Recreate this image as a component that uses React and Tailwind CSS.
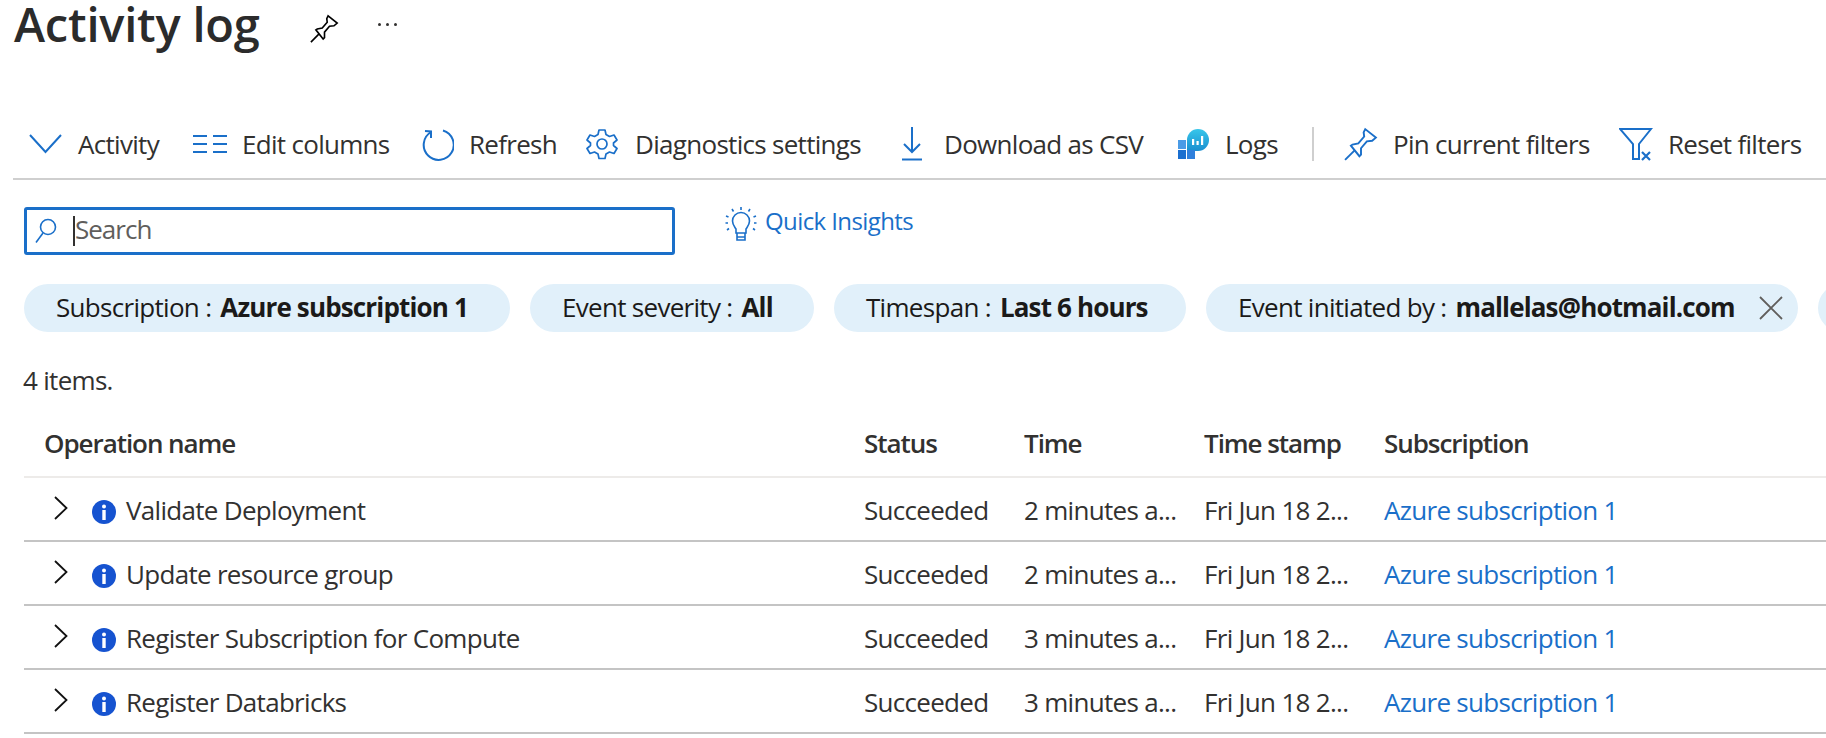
import React from 'react';

const font = "font-['Open_Sans','Noto_Sans',sans-serif]";

const PinIcon = ({ className }) => (
    <svg viewBox="0 0 32 32" fill="none" stroke="currentColor" strokeWidth="1.8" className={className}>
        <path d="M20 2 L30 10 L26.5 13 L21.5 13.5 L16 20 L16 26 L14.5 27.5 L6.5 17.5 L8 16.5 L13.5 15.5 L19 9 L18.5 5 Z" strokeLinejoin="miter" />
        <path d="M10 22 L1 31" />
    </svg>
);

const ChevronDown = () => (
    <svg viewBox="0 0 33 20" fill="none" stroke="currentColor" strokeWidth="2" className="w-[33px] h-[20px]">
        <path d="M1 1 L16.5 18 L32 1" />
    </svg>
);

const EditColumns = () => (
    <svg viewBox="0 0 34 20" fill="currentColor" className="w-[34px] h-[20px]">
        <rect x="0" y="1" width="14" height="2" />
        <rect x="0" y="9" width="14" height="2" />
        <rect x="0" y="17" width="14" height="2" />
        <rect x="20" y="1" width="14" height="2" />
        <rect x="20" y="9" width="14" height="2" />
        <rect x="20" y="17" width="14" height="2" />
    </svg>
);

const RefreshIcon = () => (
    <svg viewBox="0 0 34 34" fill="none" stroke="currentColor" strokeWidth="2" className="w-[34px] h-[34px] ml-[1px]">
        <path d="M11 5 A15 15 0 1 0 23 3.5" />
        <path d="M5 4 L11 4.5 L11 11" />
    </svg>
);

const GearIcon = () => (
    <svg viewBox="0 0 32 32" fill="none" stroke="currentColor" strokeWidth="1.7" className="w-[32px] h-[32px]">
        <circle cx="16" cy="16" r="5" />
        <path d="M13 2 L19 2 L20 6.5 L23.5 8.5 L28 7 L31 12 L27.5 15 L27.5 17.5 L31 20.5 L28 25.5 L23.5 24 L20 26 L19 30.5 L13 30.5 L12 26 L8.5 24 L4 25.5 L1 20.5 L4.5 17.5 L4.5 15 L1 12 L4 7 L8.5 8.5 L12 6.5 Z" strokeLinejoin="round" />
    </svg>
);

const DownloadIcon = () => (
    <svg viewBox="0 0 20 34" fill="none" stroke="currentColor" strokeWidth="2" className="w-[20px] h-[34px]">
        <path d="M10 0 L10 25" />
        <path d="M2 17 L10 25 L18 17" />
        <path d="M0 32.5 L20 32.5" />
    </svg>
);

const LogsIcon = () => (
    <svg viewBox="0 0 32 32" className="w-[32px] h-[32px]">
        <defs>
            <linearGradient id="logsBubble" x1="0" y1="0" x2="0" y2="1">
                <stop offset="0" stopColor="#37c6ea" />
                <stop offset="1" stopColor="#1a8fd0" />
            </linearGradient>
        </defs>
        <path d="M9 12 A11 11 0 1 1 20 23 L9 23 Z" fill="url(#logsBubble)" />
        <rect x="14" y="11" width="2.2" height="6" fill="#fff" />
        <rect x="18.5" y="13" width="2.2" height="4" fill="#fff" />
        <rect x="23" y="8" width="2.2" height="9" fill="#fff" />
        <rect x="0" y="12" width="8" height="9" fill="#4a9be6" />
        <rect x="0" y="22" width="8" height="9" fill="#1a6fd0" />
        <rect x="9" y="22" width="8" height="9" fill="#2f80dc" />
    </svg>
);

const FilterIcon = () => (
    <svg viewBox="0 0 34 34" fill="none" stroke="currentColor" strokeWidth="2" className="w-[34px] h-[34px]">
        <path d="M1 2 L32 2 L20 17 L20 32 L14 32 L14 17 Z" />
        <path d="M23 25 L31 33 M31 25 L23 33" strokeWidth="2.2" />
    </svg>
);

const SearchIcon = () => (
    <svg viewBox="0 0 22 26" fill="none" stroke="currentColor" strokeWidth="1.6" className="w-[22px] h-[26px]">
        <circle cx="13" cy="9" r="7.5" />
        <path d="M8 15 L1 24.5" />
    </svg>
);

const BulbIcon = () => (
    <svg viewBox="0 0 32 36" fill="none" stroke="currentColor" strokeWidth="1.6" className="w-[32px] h-[36px]">
        <path d="M11 27 L11 23 C9 20 7.5 18.5 7.5 15 A8.5 8.5 0 0 1 24.5 15 C24.5 18.5 23 20 21 23 L21 27 Z" />
        <path d="M12 31 L12 34 L20 34 L20 27 M12 27 L12 31 L20 31" />
        <path d="M16 1 L16 4 M7 3 L8.5 5.5 M25 3 L23.5 5.5 M1 10 L3.5 11 M31 10 L28.5 11 M0.5 17 L3 17 M31.5 17 L29 17 M2 24 L4 22.5 M30 24 L28 22.5" />
    </svg>
);

const CloseIcon = () => (
    <svg viewBox="0 0 24 24" fill="none" stroke="#605e5c" strokeWidth="1.8" className="w-[24px] h-[24px]">
        <path d="M1 1 L23 23 M23 1 L1 23" />
    </svg>
);

const ChevronRight = () => (
    <svg viewBox="0 0 14 24" fill="none" stroke="#111" strokeWidth="1.8" className="w-[14px] h-[24px]">
        <path d="M1 1 L12.5 12 L1 23" />
    </svg>
);

const InfoIcon = () => (
    <svg viewBox="0 0 24 24" className="w-[24px] h-[24px]">
        <circle cx="12" cy="12" r="12" fill="#1653d0" />
        <circle cx="12" cy="6.5" r="2" fill="#fff" />
        <rect x="10.3" y="10" width="3.4" height="10" fill="#fff" />
    </svg>
);

const toolbarItems = [
    { label: 'Activity', icon: <ChevronDown />, box: 'w-[164px]', iconBox: 'w-[49px]' },
    { label: 'Edit columns', icon: <EditColumns />, box: 'w-[226px]', iconBox: 'w-[49px]' },
    { label: 'Refresh', icon: <RefreshIcon />, box: 'w-[167px]', iconBox: 'w-[50px]' },
    { label: 'Diagnostics settings', icon: <GearIcon />, box: 'w-[316px]', iconBox: 'w-[49px]' },
    { label: 'Download as CSV', icon: <DownloadIcon />, box: 'w-[276px]', iconBox: 'w-[42px]' },
    { label: 'Logs', icon: <LogsIcon />, box: 'w-[134px]', iconBox: 'w-[47px]' },
];

const filters = [
    { name: 'Subscription', value: 'Azure subscription 1', box: 'w-[486px]' },
    { name: 'Event severity', value: 'All', box: 'w-[284px]' },
    { name: 'Timespan', value: 'Last 6 hours', box: 'w-[352px]' },
    { name: 'Event initiated by', value: 'mallelas@hotmail.com', box: 'w-[592px]', close: true },
];

const rows = [
    { name: 'Validate Deployment', time: '2 minutes a...' },
    { name: 'Update resource group', time: '2 minutes a...' },
    { name: 'Register Subscription for Compute', time: '3 minutes a...' },
    { name: 'Register Databricks', time: '3 minutes a...' },
];

const gridCols = 'grid grid-cols-[840px_160px_180px_180px_1fr]';

const App = () => {
    return (
        <div className={`${font} w-[1826px] h-[738px] overflow-hidden bg-white text-[#323130] text-[26px] tracking-[-0.7px]`}>
            {/* title */}
            <div className="h-[56px] pl-[14px] flex items-center">
                <h1 className="text-[47px] font-semibold leading-[48px] mb-[8px] tracking-[-0.2px] w-[296px] text-[#2b2b2b]">Activity log</h1>
                <PinIcon className="w-[29px] h-[29px] text-black" />
                <div className="ml-[39px] mb-[8px] flex gap-[5px]">
                    <span className="w-[3px] h-[3px] rounded-full bg-[#323130]"></span>
                    <span className="w-[3px] h-[3px] rounded-full bg-[#323130]"></span>
                    <span className="w-[3px] h-[3px] rounded-full bg-[#323130]"></span>
                </div>
            </div>

            {/* toolbar */}
            <div className="ml-[13px] mt-[53px] h-[71px] pl-[16px] flex items-center border-b-2 border-[#cfcfcf]">
                {toolbarItems.map((item) => (
                    <div key={item.label} className={`flex items-center ${item.box}`}>
                        <span className={`${item.iconBox} flex text-[#1a6fc9]`}>{item.icon}</span>
                        <span className="pt-[2px]">{item.label}</span>
                    </div>
                ))}
                <div className="w-[2px] h-[34px] bg-[#cfcfcf] mr-[30px]"></div>
                <div className="flex items-center w-[275px]">
                    <span className="w-[49px] flex text-[#1a6fc9]"><PinIcon className="w-[34px] h-[34px]" /></span>
                    <span className="pt-[2px]">Pin current filters</span>
                </div>
                <div className="flex items-center">
                    <span className="w-[49px] flex text-[#1a6fc9]"><FilterIcon /></span>
                    <span className="pt-[2px]">Reset filters</span>
                </div>
            </div>

            {/* search */}
            <div className="mt-[27px] ml-[24px] flex items-start">
                <div className="w-[651px] h-[48px] border-[3px] border-[#1a6fc9] rounded-[3px] flex items-center pl-[8px]">
                    <span className="w-[38px] flex text-[#1a6fc9]"><SearchIcon /></span>
                    <span className="border-l-2 border-[#323130] h-[30px] leading-[26px] tracking-[-1px] text-[#605e5c]">Search</span>
                </div>
                <div className="ml-[50px] -mt-[1px] flex items-center gap-[8px] text-[#1a6fc9]">
                    <BulbIcon />
                    <span className="-mt-[6px] text-[24px] tracking-[-0.6px]">Quick Insights</span>
                </div>
            </div>

            {/* filter pills */}
            <div className="mt-[29px] ml-[24px] flex gap-[20px]">
                {filters.map((f) => (
                    <div key={f.name} className={`${f.box} shrink-0 h-[48px] rounded-[24px] bg-[#e1f0fa] pl-[32px] pb-[2px] flex items-center text-[#1b1a19] whitespace-nowrap`}>
                        <span className="mr-[3px]">{f.name} :&nbsp;</span>
                        <span className="font-bold tracking-[-0.85px]">{f.value}</span>
                        {f.close && <span className="ml-auto mr-[15px] mt-[2px] flex"><CloseIcon /></span>}
                    </div>
                ))}
                <div className="w-[60px] shrink-0 h-[48px] rounded-[24px] bg-[#e1f0fa]"></div>
            </div>

            <div className="mt-[31px] ml-[23px] h-[34px] leading-[34px]">4 items.</div>

            {/* table */}
            <div className="ml-[24px] mt-[15px]">
                <div className={`${gridCols} h-[66px] pb-[2px] items-center font-semibold tracking-[-1.05px] border-b-2 border-[#edebe9]`}>
                    <div className="pl-[20px]">Operation name</div>
                    <div>Status</div>
                    <div>Time</div>
                    <div>Time stamp</div>
                    <div>Subscription</div>
                </div>
                {rows.map((row) => (
                    <div key={row.name} className={`${gridCols} h-[64px] items-center border-b-2 border-[#c4c4c4] pt-[3px]`}>
                        <div className="pl-[30px] flex items-center">
                            <span className="w-[38px] flex -mt-[6px]"><ChevronRight /></span>
                            <span className="w-[34px] flex mt-[2px]"><InfoIcon /></span>
                            <span>{row.name}</span>
                        </div>
                        <div>Succeeded</div>
                        <div>{row.time}</div>
                        <div>Fri Jun 18 2...</div>
                        <div className="text-[#1a6fc9]">Azure subscription 1</div>
                    </div>
                ))}
            </div>
        </div>
    );
};

export default App;
